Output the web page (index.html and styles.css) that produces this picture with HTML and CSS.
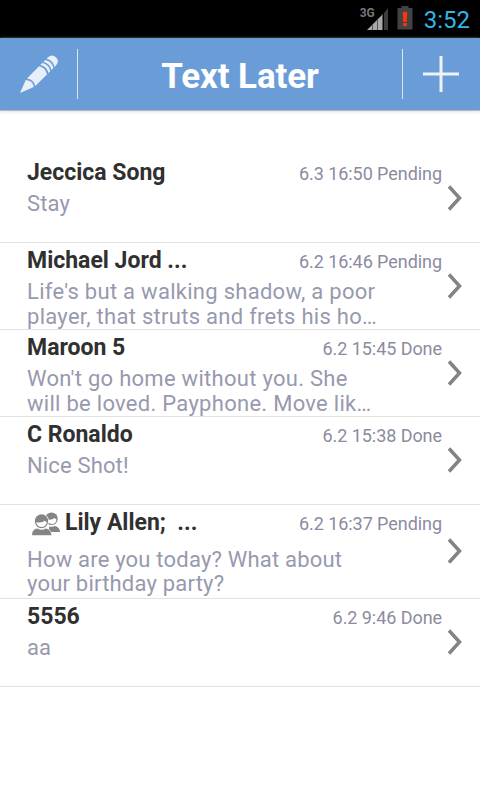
FILE: index.html
```html
<!DOCTYPE html>
<html lang="en">
<head>
<meta charset="utf-8">
<title>Text Later</title>
<link rel="stylesheet" href="styles.css">
</head>
<body>
<div class="status">
  <span class="network">3G</span>
  <svg class="signal" width="22" height="24" viewBox="0 0 22 24"><path d="M0 23 16 7v16z" fill="#a9a9a9"/><path d="M17 6 21 1v22h-4z" fill="#3c3c3c"/><path d="M5.500 17v6M10.500 13v10M15.500 8v15" stroke="#555" stroke-width="1"/></svg>
  <svg class="battery" width="16" height="24" viewBox="0 0 16 24"><path d="M4.500 0h7v2H15.500v21.500H.5V2h4z" fill="#434343"/><path d="M5.800 6h4.400l-.5 10H6.300zM6.200 17h3.600v3H6.200z" fill="#ff3311"/></svg>
  <span class="clock">3:52</span>
</div>
<header class="bar">
  <div class="action edit">
    <svg width="38" height="38" viewBox="0 0 38 38" fill="#e8effa"><path d="M0 38 5.800 25Q13 25.500 13.800 32z"/><path d="M7 23.500 19 11.300Q25.500 12.500 27 19.500L15.300 31Q13.500 24 7 23.500z"/><path d="M20.300 10 22.200 8.100Q29 9.500 30.300 16.200L28.400 18.100Q27 11.300 20.300 10z"/><path d="M23.400 6.900 25.300 5Q32 6.500 33.400 13L31.500 15Q30 8.200 23.400 6.900z"/><path d="M26.500 3.800 28 2.300Q32-1.200 36 2.200 39.800 6 36 10.500L34.600 12Q33 5.300 26.500 3.800z"/></svg>
  </div>
  <h1>Text Later</h1>
  <div class="action add">
    <svg width="36" height="36" viewBox="0 0 36 36"><path d="M18 0v36M0 18h36" stroke="#eef3fb" stroke-width="3"/></svg>
  </div>
</header>
<main class="list">
  <article class="row">
    <div class="top"><h2>Jeccica Song</h2><time>6.3 16:50 Pending</time></div>
    <p>Stay</p>
    <svg class="chevron" width="16" height="26" viewBox="0 0 16 26"><path d="M2 1.500 12.500 13 2 24.500"/></svg>
  </article>
  <article class="row short">
    <div class="top"><h2>Michael Jord ...</h2><time>6.2 16:46 Pending</time></div>
    <p>Life's but a walking shadow, a poor<br>player, that struts and frets his ho…</p>
    <svg class="chevron" width="16" height="26" viewBox="0 0 16 26"><path d="M2 1.500 12.500 13 2 24.500"/></svg>
  </article>
  <article class="row short">
    <div class="top"><h2>Maroon 5</h2><time>6.2 15:45 Done</time></div>
    <p>Won't go home without you. She<br>will be loved. Payphone. Move lik…</p>
    <svg class="chevron" width="16" height="26" viewBox="0 0 16 26"><path d="M2 1.500 12.500 13 2 24.500"/></svg>
  </article>
  <article class="row">
    <div class="top"><h2>C Ronaldo</h2><time>6.2 15:38 Done</time></div>
    <p>Nice Shot!</p>
    <svg class="chevron" width="16" height="26" viewBox="0 0 16 26"><path d="M2 1.500 12.500 13 2 24.500"/></svg>
  </article>
  <article class="row group">
    <div class="top">
      <svg class="people" width="29" height="24" viewBox="0 0 29 24"><circle cx="19.500" cy="6.800" r="6.300" fill="#858585"/><path d="M15 7.500q5 1 7.500-1.500l2 1.500q-.5 4.500-4.500 4.500-3 0-5-4.500z" fill="#fff"/><path d="M17 20v-5.500q3.500.8 6-.5 4.500 1 5.200 6z" fill="#858585"/><ellipse cx="9.500" cy="9.300" rx="7.500" ry="7.800" fill="#fff"/><ellipse cx="9.500" cy="9.200" rx="6.600" ry="7" fill="#858585"/><path d="M4.200 10.200q6 .9 8.600-1.500l2 1.500q-.7 4.800-5.200 4.800t-5.400-4.800z" fill="#fff"/><path d="M-.5 23.600q.5-6.600 5.500-7.400 4.500 2.600 9 0 5 .8 5.900 7.400z" fill="#858585" stroke="#fff" stroke-width=".6"/></svg>
      <h2>Lily Allen;&nbsp; ...</h2><time>6.2 16:37 Pending</time></div>
    <p>How are you today? What about<br>your birthday party?</p>
    <svg class="chevron" width="16" height="26" viewBox="0 0 16 26"><path d="M2 1.500 12.500 13 2 24.500"/></svg>
  </article>
  <article class="row">
    <div class="top"><h2>5556</h2><time>6.2 9:46 Done</time></div>
    <p>aa</p>
    <svg class="chevron" width="16" height="26" viewBox="0 0 16 26"><path d="M2 1.500 12.500 13 2 24.500"/></svg>
  </article>
</main>
</body>
</html>
```
FILE: styles.css
```css
* { box-sizing: border-box; }
body {
  margin: 0;
  height: 800px;
  overflow: hidden;
  background: #fff;
  font-family: Roboto, sans-serif;
}
.status {
  display: flex;
  height: 38px;
  padding-right: 10px;
  justify-content: flex-end;
  background: #000;
}
.network { margin: 6px -8px 0 0; font-size: 12px; line-height: 14px; font-weight: 700; color: #777; z-index: 1; }
.signal { margin-top: 7px; }
.battery { margin: 6px 0 0 8px; }
.clock { margin-left: 11px; font-size: 24px; line-height: 40px; color: #33b5e5; }
.bar {
  display: flex;
  align-items: center;
  height: 73px;
  background: #6a9dd7;
  border-bottom: 1px solid #b5b8be;
  box-shadow: 0 1px 3px #e4dfe4;
}
.bar h1 { flex: 1; margin: 6px 0 0; font-size: 35px; line-height: 42px; font-weight: 700; letter-spacing: -0.1px; text-align: center; color: #fff; }
.action { display: flex; align-items: center; width: 78px; height: 50px; margin-bottom: 1px; }
.edit { padding-left: 20px; border-right: 1px solid #e3e7ed; }
.add { padding-left: 20px; border-left: 1px solid #e3e7ed; }
.list { padding-top: 44px; }
.row {
  position: relative;
  height: 88px;
  padding: 2px 38px 0 27px;
  border-bottom: 1px solid #e3e3e3;
}
.row.short { height: 87px; }
.row.group { height: 94px; }
.top { display: flex; height: 34px; align-items: flex-start; }
.group .top { height: 41px; }
.top h2 { margin: 0; font-size: 23px; line-height: 31px; font-weight: 700; color: #303030; white-space: nowrap; }
.top time { margin-left: auto; font-size: 18px; line-height: 34px; letter-spacing: -0.06px; color: #8b8ba1; white-space: nowrap; }
.people { margin: 5px 4px 0 5px; }
.row p { margin: 0; font-size: 22px; line-height: 25px; letter-spacing: 0.15px; color: #9799ae; white-space: nowrap; }
.row.short p { letter-spacing: 0.28px; }
.row.group p { line-height: 24px; letter-spacing: 0.2px; }
.chevron { position: absolute; right: 17px; top: 30px; fill: none; stroke: #838383; stroke-width: 3.5; }
.group .chevron { top: 33px; }
```
